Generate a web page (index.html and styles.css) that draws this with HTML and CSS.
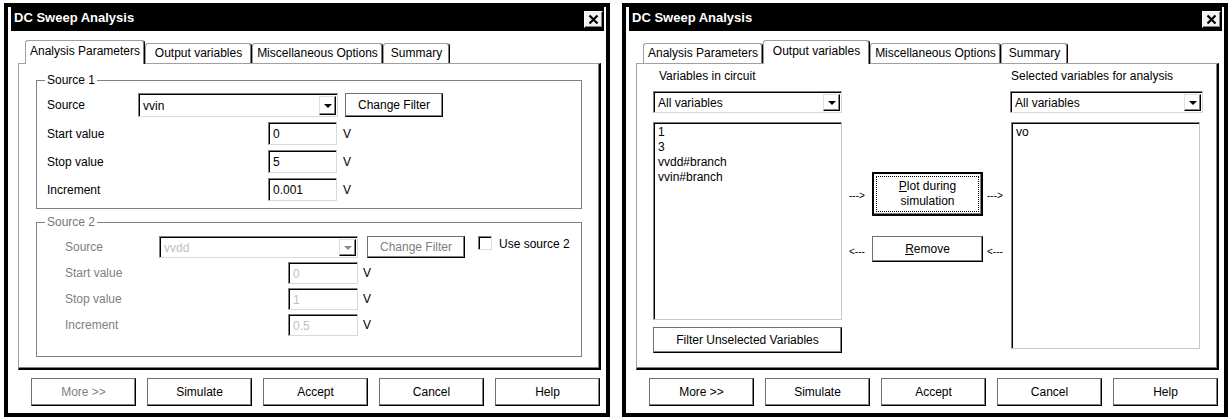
FILE: index.html
```html
<!DOCTYPE html>
<html lang="en">
<head>
<meta charset="utf-8">
<title>DC Sweep Analysis</title>
<link rel="stylesheet" href="styles.css">
</head>
<body>
<div class="screen">

  <section class="dialog">
    <header class="titlebar">
      <span class="title">DC Sweep Analysis</span>
      <span class="close"><svg width="17" height="15" viewBox="0 0 17 15"><path d="M4.5 3.5 L12.5 11.5 M12.5 3.5 L4.5 11.5" stroke="#000" stroke-width="2.2" fill="none"/></svg></span>
    </header>
    <nav class="tabs">
      <span class="tab t1 active">Analysis Parameters</span>
      <span class="tab t2">Output variables</span>
      <span class="tab t3">Miscellaneous Options</span>
      <span class="tab t4">Summary</span>
    </nav>
    <div class="panel">
      <fieldset class="group g1">
        <legend>Source 1</legend>
        <div class="row r-src">
          <span class="lbl">Source</span>
          <div class="combo"><span class="val">vvin</span><span class="drop"><i class="tri"></i></span></div>
          <button class="btn cf">Change Filter</button>
        </div>
        <div class="row r-val"><span class="lbl">Start value</span><span class="input">0</span><span class="unit">V</span></div>
        <div class="row r-val"><span class="lbl">Stop value</span><span class="input">5</span><span class="unit">V</span></div>
        <div class="row r-val"><span class="lbl">Increment</span><span class="input">0.001</span><span class="unit">V</span></div>
      </fieldset>
      <fieldset class="group g2">
        <legend>Source 2</legend>
        <div class="row r-src">
          <span class="lbl">Source</span>
          <div class="combo off"><span class="val">vvdd</span><span class="drop"><i class="tri"></i></span></div>
          <button class="btn cf off">Change Filter</button>
          <span class="check"></span>
          <span class="check-label">Use source 2</span>
        </div>
        <div class="row r-val"><span class="lbl">Start value</span><span class="input off">0</span><span class="unit">V</span></div>
        <div class="row r-val"><span class="lbl">Stop value</span><span class="input off">1</span><span class="unit">V</span></div>
        <div class="row r-val"><span class="lbl">Increment</span><span class="input off">0.5</span><span class="unit">V</span></div>
      </fieldset>
    </div>
    <div class="actions">
      <button class="btn act off">More &gt;&gt;</button>
      <button class="btn act">Simulate</button>
      <button class="btn act">Accept</button>
      <button class="btn act">Cancel</button>
      <button class="btn act">Help</button>
    </div>
  </section>

  <section class="dialog">
    <header class="titlebar">
      <span class="title">DC Sweep Analysis</span>
      <span class="close"><svg width="17" height="15" viewBox="0 0 17 15"><path d="M4.5 3.5 L12.5 11.5 M12.5 3.5 L4.5 11.5" stroke="#000" stroke-width="2.2" fill="none"/></svg></span>
    </header>
    <nav class="tabs">
      <span class="tab t1">Analysis Parameters</span>
      <span class="tab t2 active">Output variables</span>
      <span class="tab t3">Miscellaneous Options</span>
      <span class="tab t4">Summary</span>
    </nav>
    <div class="panel">
      <div class="ov">
        <div class="col col-l">
          <span class="caption">Variables in circuit</span>
          <div class="combo"><span class="val">All variables</span><span class="drop"><i class="tri"></i></span></div>
          <ul class="list list-l">
            <li>1</li>
            <li>3</li>
            <li>vvdd#branch</li>
            <li>vvin#branch</li>
          </ul>
          <button class="btn filter">Filter Unselected Variables</button>
        </div>
        <div class="col col-m">
          <div class="mrow mrow1">
            <span class="arrow">---&gt;</span>
            <button class="btn mbtn default"><span class="focus"><span><u>P</u>lot during</span><span>simulation</span></span></button>
            <span class="arrow">---&gt;</span>
          </div>
          <div class="mrow mrow2">
            <span class="arrow">&lt;---</span>
            <button class="btn mbtn"><span><u>R</u>emove</span></button>
            <span class="arrow">&lt;---</span>
          </div>
        </div>
        <div class="col col-r">
          <span class="caption">Selected variables for analysis</span>
          <div class="combo"><span class="val">All variables</span><span class="drop"><i class="tri"></i></span></div>
          <ul class="list list-r">
            <li>vo</li>
          </ul>
        </div>
      </div>
    </div>
    <div class="actions">
      <button class="btn act">More &gt;&gt;</button>
      <button class="btn act">Simulate</button>
      <button class="btn act">Accept</button>
      <button class="btn act">Cancel</button>
      <button class="btn act">Help</button>
    </div>
  </section>

</div>
</body>
</html>
```

FILE: styles.css
```css
* { box-sizing: border-box; }

html, body {
  margin: 0;
  padding: 0;
  background: #fff;
}

body {
  width: 1230px;
  height: 418px;
  overflow: hidden;
  font-family: "Liberation Sans", Arial, sans-serif;
  font-size: 12px;
  color: #000;
}

.screen {
  display: flex;
  gap: 12px;
  padding: 3px 0 0 4px;
}

/* ---------- window frame ---------- */
.dialog {
  width: 606px;
  height: 414px;
  border: 4px solid #000;
  padding: 0 2px 0 3px;
  display: flex;
  flex-direction: column;
  background: #fff;
}

.titlebar {
  height: 24px;
  background: #000;
  color: #fff;
  display: flex;
  align-items: center;
  padding: 0 1px 0 3px;
}

.title {
  font-weight: bold;
  font-size: 13px;
  line-height: 16px;
  padding-bottom: 3px;
}

.close {
  margin-left: auto;
  width: 19px;
  height: 17px;
  display: flex;
  align-items: center;
  justify-content: center;
  background: #f2f2f2;
  border: 1px solid;
  border-color: #fff #000 #000 #fff;
  box-shadow: inset -1px -1px 0 #808080;
}

/* ---------- tabs ---------- */
.tabs {
  display: flex;
  align-items: flex-end;
  height: 23px;
  margin: 9px 0 0 14px;
}

.tab {
  height: 20px;
  line-height: 18px;
  text-align: center;
  white-space: nowrap;
  border: 1px solid;
  border-bottom: none;
  border-color: #a0a0a0 #000 transparent #a0a0a0;
  border-radius: 3px 3px 0 0;
  box-shadow: inset -1px 0 0 #808080;
  background: #fff;
}

.tab.active {
  position: relative;
  height: 24px;
  margin-bottom: -1px;
  line-height: 20px;
}

.t1 { width: 120px; }
.t2 { width: 107px; }
.t3 { width: 131px; }
.t4 { width: 67px; }

/* ---------- tab panel ---------- */
.panel {
  width: 583px;
  height: 307px;
  margin-left: 7px;
  border-style: solid;
  border-width: 1px 2px 2px 1px;
  border-color: #a0a0a0 #000 #000 #a0a0a0;
  box-shadow: inset -1px -1px 0 #808080;
}

/* ---------- group boxes ---------- */
.group {
  margin: 0 0 0 17px;
  width: 546px;
  min-width: 0;
  border: 1px solid #808080;
  padding: 6px 8px 7px 8px;
}

.group legend {
  padding: 0 2px;
  line-height: 14px;
  font-size: 12px;
}

.g1 { margin-top: 9px; }

.g2 {
  margin-top: 6px;
  padding-top: 7px;
  padding-bottom: 20px;
}

.g2 legend { color: #777; }

.row {
  display: flex;
  align-items: center;
  white-space: nowrap;
}

.g1 .row { padding-left: 2px; height: 23px; margin-top: 5px; }
.g1 .row.r-src { height: 24px; margin-top: 0; }
.g1 .r-src .lbl { width: 91px; }
.g1 .r-src .combo { width: 200px; height: 24px; }
.g1 .r-val .lbl { width: 221px; }
.g1 .input { width: 69px; height: 23px; }
.g1 .unit { margin-left: 6px; }

.g2 .row { padding-left: 20px; height: 22px; margin-top: 4px; }
.g2 .row.r-src { margin-top: 0; }
.g2 .lbl { color: #808080; }
.g2 .r-src .lbl { width: 94px; }
.g2 .r-src .combo { width: 199px; height: 22px; }
.g2 .r-val .lbl { width: 223px; }
.g2 .input { width: 70px; height: 22px; }
.g2 .unit { margin-left: 5px; }

.cf {
  width: 98px;
  height: 24px;
}
.g1 .cf { margin-left: 7px; }
.g2 .cf { margin-left: 9px; height: 22px; }

.check {
  width: 14px;
  height: 14px;
  margin-left: 13px;
  border: 1px solid;
  border-color: #808080 #dcdcdc #dcdcdc #808080;
  box-shadow: inset 1px 1px 0 #000;
  background: #fff;
  align-self: flex-start;
}

.check-label { margin-left: 7px; margin-top: -6px; }

/* ---------- controls ---------- */
.input {
  display: flex;
  align-items: center;
  padding: 1px 0 0 4px;
  border: 1px solid;
  border-color: #808080 #d8d8d8 #d8d8d8 #808080;
  box-shadow: inset 1px 1px 0 #000;
  background: #fff;
}

.input.off { color: #c0c0c0; }

.combo {
  display: flex;
  align-items: stretch;
  padding: 2px 1px 1px 2px;
  border: 1px solid;
  border-color: #808080 #d8d8d8 #d8d8d8 #808080;
  box-shadow: inset 1px 1px 0 #000;
  background: #fff;
}

.combo .val {
  flex: 1;
  display: flex;
  align-items: center;
  padding-left: 2px;
  overflow: hidden;
}

.combo.off .val { color: #c0c0c0; }

.drop {
  width: 17px;
  display: flex;
  align-items: center;
  justify-content: center;
  background: #fff;
  border: 1px solid;
  border-color: #e0e0e0 #000 #000 #e0e0e0;
  box-shadow: inset -1px -1px 0 #808080;
}

.tri {
  display: block;
  width: 0;
  height: 0;
  border-left: 4px solid transparent;
  border-right: 4px solid transparent;
  border-top: 4px solid #000;
  margin-top: 1px;
}

.combo.off .tri { border-top-color: #8a8a8a; }

.btn {
  font: inherit;
  color: #000;
  background: #fff;
  padding: 0;
  margin: 0;
  border: 1px solid;
  border-color: #707070 #000 #000 #707070;
  box-shadow: inset -1px -1px 0 #808080;
  text-align: center;
  white-space: nowrap;
}

.btn.off { color: #808080; }

/* ---------- bottom buttons ---------- */
.actions {
  display: flex;
  gap: 11px;
  margin-top: 8px;
  padding-left: 20px;
}

.act {
  width: 105px;
  height: 28px;
}

/* ---------- output variables page ---------- */
.ov {
  display: flex;
  padding: 5px 0 0 16px;
}

.col {
  display: flex;
  flex-direction: column;
}

.caption {
  height: 14px;
  line-height: 14px;
  white-space: nowrap;
}

.col-l { width: 189px; }
.col-l .caption { padding-left: 6px; }
.col-l .combo { margin-top: 8px; height: 22px; }

.col-r { width: 193px; }
.col-r .caption { padding-left: 1px; }
.col-r .combo { margin-top: 8px; height: 22px; }

.list {
  list-style: none;
  margin: 9px 0 0 0;
  padding: 2px 0 0 4px;
  border: 1px solid;
  border-color: #808080 #c8c8c8 #c8c8c8 #808080;
  box-shadow: inset 1px 1px 0 #000;
  background: #fff;
}

.list li {
  line-height: 15px;
  height: 15px;
}

.list-l { height: 198px; }
.list-r { height: 227px; width: 189px; margin-left: 1px; }

.filter {
  margin-top: 7px;
  height: 26px;
  width: 189px;
}

.col-m {
  width: 168px;
  padding-top: 103px;
}

.mrow {
  display: flex;
  align-items: center;
  padding-left: 7px;
}

.mrow1 { height: 44px; }
.mrow1 .arrow { padding-top: 4px; }
.mrow2 { height: 26px; margin-top: 20px; }
.mrow2 .arrow { padding-top: 6px; }

.arrow {
  width: 18px;
  font-size: 10px;
  line-height: 12px;
  white-space: nowrap;
}

.mbtn {
  width: 111px;
  height: 100%;
  margin: 0 4px 0 5px;
  display: flex;
  align-items: center;
  justify-content: center;
}

.mbtn.default {
  border: 2px solid #000;
  box-shadow: inset -1px -1px 0 #808080;
  padding: 2px;
  align-items: stretch;
}

.focus {
  flex: 1;
  display: flex;
  flex-direction: column;
  justify-content: center;
  align-items: center;
  border: 1px dotted #000;
  line-height: 15px;
}
```
